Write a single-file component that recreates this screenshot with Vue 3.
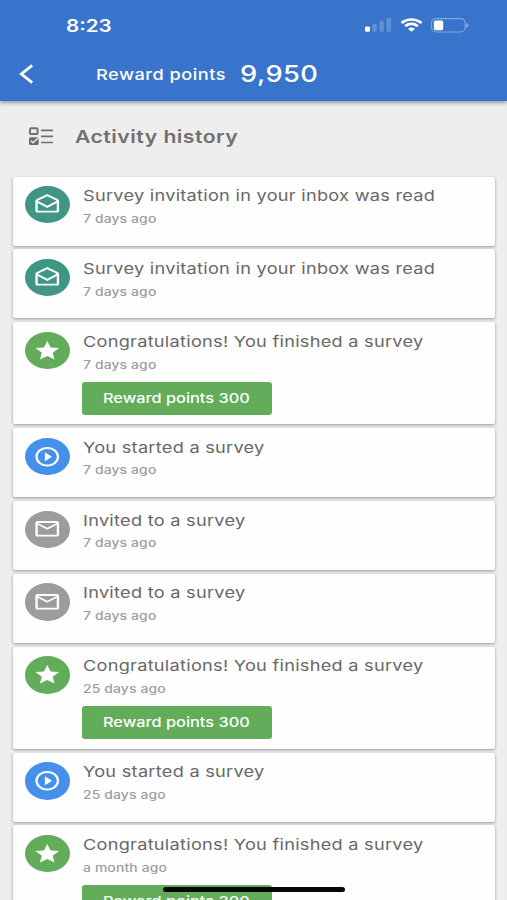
<script setup>
const rows = [
  { kind: 'read', title: 'Survey invitation in your inbox was read', time: '7 days ago' },
  { kind: 'read', title: 'Survey invitation in your inbox was read', time: '7 days ago' },
  { kind: 'done', title: 'Congratulations! You finished a survey', time: '7 days ago', points: 300 },
  { kind: 'start', title: 'You started a survey', time: '7 days ago' },
  { kind: 'invite', title: 'Invited to a survey', time: '7 days ago' },
  { kind: 'invite', title: 'Invited to a survey', time: '7 days ago' },
  { kind: 'done', title: 'Congratulations! You finished a survey', time: '25 days ago', points: 300 },
  { kind: 'start', title: 'You started a survey', time: '25 days ago' },
  { kind: 'done', title: 'Congratulations! You finished a survey', time: 'a month ago', points: 300 },
]
const glyphs = {
  read: 'M21.99 8c0-.72-.37-1.35-.94-1.7L12 1 2.95 6.3C2.38 6.65 2 7.28 2 8v10c0 1.1.9 2 2 2h16c1.1 0 2-.9 2-2l-.01-10zM20 8v.01L12 13 4 8l8-4.68L20 8zM4 18v-7.66l8 5.02 8-5.02V18H4z',
  done: 'M12 17.27L18.18 21l-1.64-7.03L22 9.24l-7.19-.61L12 2 9.19 8.63 2 9.24l5.46 4.73L5.82 21z',
  start: 'M10 16.5l6-4.5-6-4.5v9zM12 2C6.48 2 2 6.48 2 12s4.48 10 10 10 10-4.48 10-10S17.52 2 12 2zm0 18c-4.41 0-8-3.59-8-8s3.59-8 8-8 8 3.59 8 8-3.59 8-8 8z',
  invite: 'M22 6c0-1.1-.9-2-2-2H4c-1.1 0-2 .9-2 2v12c0 1.1.9 2 2 2h16c1.1 0 2-.9 2-2V6zm-2 0l-8 5-8-5h16zm0 12H4V8l8 5 8-5v10z',
}
</script>

<template>
  <div class="screen">
    <header class="top">
      <div class="status">
        <span class="clock">8:23</span>
        <svg class="signal" viewBox="0 0 27 14">
          <rect x="0" y="8.5" width="5" height="5.3" rx="1.4" fill="#fff" />
          <g fill="#fff" opacity=".2">
            <rect x="7.2" y="6" width="4.6" height="7.8" rx="1.2" />
            <rect x="14.3" y="3.3" width="4.6" height="10.5" rx="1.2" />
            <rect x="21.5" y="0" width="4.6" height="13.8" rx="1.2" />
          </g>
        </svg>
        <svg class="wifi" viewBox="0 0 17 12" preserveAspectRatio="none">
          <path fill="#fff" d="M8.5 2.4c2.4 0 4.6.9 6.3 2.5.1.1.3.1.4 0l1.2-1.2c.1-.1.1-.3 0-.5C12-.9 5-.9.6 3.2c-.1.2-.1.4 0 .5l1.2 1.2c.1.1.3.1.4 0C3.9 3.3 6.1 2.4 8.5 2.4zm0 3.9c1.3 0 2.6.5 3.5 1.4.2.1.3.1.5 0l1.2-1.3c.1-.1.1-.3 0-.4-2.9-2.8-7.5-2.8-10.4 0-.1.1-.1.3 0 .4l1.2 1.3c.2.1.3.1.5 0 .9-.9 2.2-1.400 3.500-1.400zm2.400 2.700c.1.1.1.3 0 .4l-2.200 2.200c-.1.1-.3.1-.4 0L6.100 9.400c-.1-.1-.1-.3 0-.4 1.400-1.200 3.400-1.200 4.800 0z" />
        </svg>
        <svg class="battery" viewBox="0 0 38 15">
          <rect x=".6" y=".6" width="33.5" height="13.4" rx="4.4" fill="none" stroke="#fff" stroke-opacity=".38" stroke-width="1.1" />
          <rect x="2.900" y="2.400" width="9.300" height="9.800" rx="1.600" fill="#fff" />
          <path d="M35.3 4.9c1.4.4 2 1.3 2 2.4s-.6 2-2 2.4z" fill="#fff" fill-opacity=".45" />
        </svg>
      </div>
      <div class="bar">
        <svg class="back" viewBox="0 0 16 20">
          <path d="M13.200 1.300 2.400 10l10.800 8.700" fill="none" stroke="#fff" stroke-width="2.800" />
        </svg>
        <span class="label">Reward points</span>
        <span class="total">9,950</span>
      </div>
    </header>

    <div class="heading">
      <svg class="list-icon" viewBox="0 0 26 19">
        <g fill="none" stroke="#707070">
          <rect x="2" y="1.300" width="7.600" height="5.800" rx="1.200" stroke-width="2" />
          <path d="M13 3.300H25M13 9.300H25M13 15.500H25" stroke-width="1.700" />
        </g>
        <rect x="1" y="10.200" width="9.600" height="7.900" rx="1.700" fill="#6c6c6c" />
        <path d="M2.800 13.700l2.200 2 5-4.600" fill="none" stroke="#eee" stroke-width="1.400" />
      </svg>
      <h1>Activity history</h1>
    </div>

    <main class="feed">
      <article v-for="(row, i) in rows" :key="i" class="card" :class="{ tall: row.points }">
        <div class="badge" :class="row.kind">
          <svg viewBox="0 0 24 24" preserveAspectRatio="none"><path :d="glyphs[row.kind]" fill="#fff" /></svg>
        </div>
        <div class="body">
          <div class="title"><span>{{ row.title }}</span></div>
          <div class="time"><span>{{ row.time }}</span></div>
          <div v-if="row.points" class="reward"><span>Reward points {{ row.points }}</span></div>
        </div>
      </article>
    </main>
    <div class="home"></div>
  </div>
</template>

<style>
body { margin: 0; background: #eee; overflow: hidden; }
</style>

<style scoped>
.screen {
  position: relative;
  width: 507px;
  height: 900px;
  overflow: hidden;
  background: #eeeeee;
  font-family: Inter, "Liberation Sans", sans-serif;
}
.screen span, h1 { display: inline-block; white-space: nowrap; transform: scaleX(1.21); transform-origin: left center; }
.top {
  height: 101px;
  box-sizing: border-box;
  background: #3874cb;
  color: #fff;
  box-shadow: 0 2px 4px rgba(0, 0, 0, .35);
}
.status { display: flex; height: 50px; padding-left: 66px; box-sizing: border-box; }
.clock { width: 299px; margin-top: 15px; font-size: 17px; line-height: 22px; font-weight: 600; flex: none; }
.signal { width: 27px; height: 14px; margin-top: 18px; flex: none; }
.wifi { width: 23px; height: 14px; margin: 18px 0 0 8px; flex: none; }
.battery { width: 38px; height: 15px; margin: 18px 0 0 8px; flex: none; }
.bar { display: flex; align-items: center; height: 48px; padding-left: 19px; }
.back { width: 16px; height: 20px; flex: none; }
.label { width: 144px; margin-left: 61px; font-size: 15px; font-weight: 500; letter-spacing: .42px; flex: none; }
.total { font-size: 22.5px; font-weight: 500; line-height: 28px; letter-spacing: .4px; }
.heading { display: flex; align-items: center; height: 70px; padding-left: 28px; }
.list-icon { width: 26px; height: 19px; flex: none; }
h1 { margin: 1px 0 0 21px; font-size: 17.5px; line-height: 24px; font-weight: 600; letter-spacing: .39px; color: #707070; }
.feed { display: flex; flex-direction: column; gap: 3.86px; padding: 5.6px 12px 0 12.5px; }
.card {
  display: flex;
  flex: none;
  height: 69px;
  box-sizing: border-box;
  padding: 9.5px 0 0 12px;
  background: #fefefe;
  border-radius: 2px;
  box-shadow: 0 1px 3px rgba(0, 0, 0, .38);
}
.card.tall { height: 102px; }
.badge {
  display: flex;
  flex: none;
  align-items: center;
  justify-content: center;
  width: 45px;
  height: 37.4px;
  border-radius: 50%;
}
.badge svg { width: 28.5px; height: 23.5px; }
.badge.read { background: #3f9684; }
.badge.done { background: #62ac5a; }
.badge.start { background: #4590e9; }
.badge.invite { background: #9c9c9c; }
.body { margin-left: 13px; }
.title { height: 20px; font-size: 15px; line-height: 20px; letter-spacing: .225px; color: #686868; }
.time { height: 16px; margin-top: 4.7px; font-size: 11.5px; line-height: 16px; letter-spacing: .11px; font-weight: 500; color: #9d9d9d; }
.reward {
  width: 190px;
  height: 33px;
  margin-top: 9.3px;
  margin-left: -.5px;
  padding-left: 21px;
  box-sizing: border-box;
  border-radius: 3px;
  background: #62ac5a;
  color: #fff;
  font-size: 13.5px;
  line-height: 32px;
  font-weight: 500;
}
.home {
  position: absolute;
  left: 163px;
  bottom: 8px;
  width: 182px;
  height: 5px;
  border-radius: 3px;
  background: #080808;
}
</style>
